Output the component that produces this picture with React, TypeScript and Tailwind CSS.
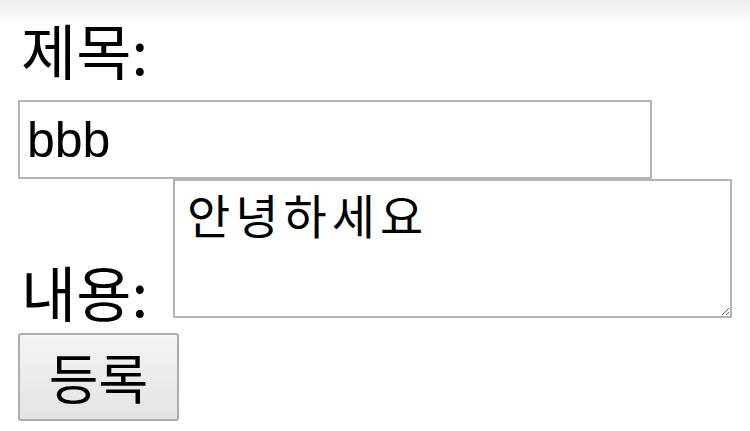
export default function App() {
  return (
    <div className="relative h-[431px] w-[750px] overflow-hidden bg-[linear-gradient(#ececec,#ffffff_24px)] font-['Noto_Sans_CJK_KR',sans-serif] text-black">
      <form className="flex flex-col items-start pl-[18px] pt-[14px]">
        <label className="ml-[3px] text-[60px] leading-[70px]">제목:</label>
        <input
          type="text"
          defaultValue="bbb"
          className="mt-[16px] h-[79px] w-[634px] border-2 border-[#b4b4b4] bg-white px-[7px] font-['Liberation_Sans',Arial,sans-serif] text-[50px] leading-none text-black outline-none"
        />
        <div className="flex items-end">
          <label className="ml-[3px] mb-[-8px] text-[60px] leading-[70px]">내용:</label>
          <textarea
            defaultValue="안녕하세요"
            className="ml-[25px] h-[139px] w-[559px] border-2 border-[#b4b4b4] bg-white px-[12px] py-[5px] font-['Noto_Sans_CJK_KR',sans-serif] text-[47px] leading-[56px] tracking-[5px] text-black outline-none"
          />
        </div>
        <button
          type="button"
          className="mt-[15px] h-[88px] w-[161px] rounded-[3px] border-2 border-[#adadad] bg-[linear-gradient(#f4f4f4,#e3e3e3)] text-[54px] leading-none text-black"
        >
          등록
        </button>
      </form>
    </div>
  );
}
